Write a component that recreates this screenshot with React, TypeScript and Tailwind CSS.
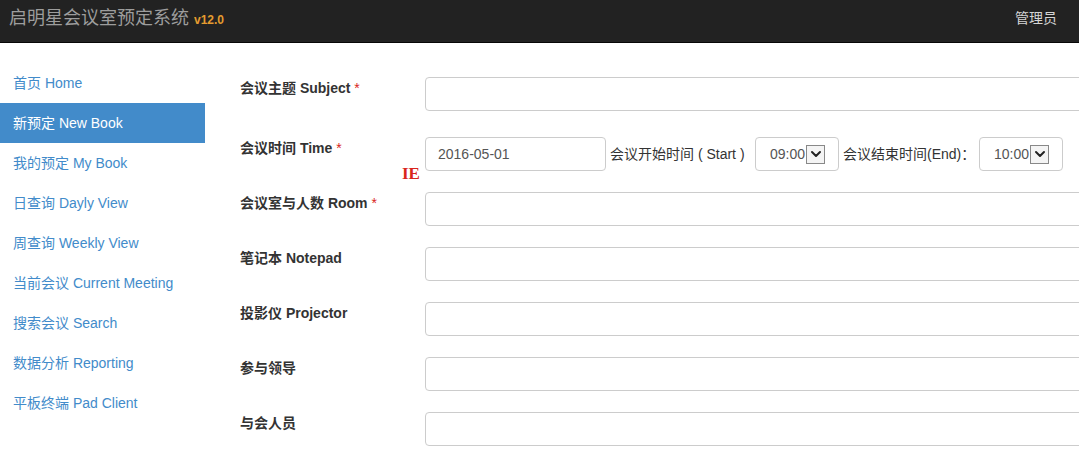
import { ChevronDown } from "lucide-react";

const menu = [
  "首页 Home",
  "新预定 New Book",
  "我的预定 My Book",
  "日查询 Dayly View",
  "周查询 Weekly View",
  "当前会议 Current Meeting",
  "搜索会议 Search",
  "数据分析 Reporting",
  "平板终端 Pad Client",
];

const rows = [
  { label: "会议室与人数 Room", required: true },
  { label: "笔记本 Notepad", required: false },
  { label: "投影仪 Projector", required: false },
  { label: "参与领导", required: false },
  { label: "与会人员", required: false },
];

const font = "font-['Liberation_Sans','Noto_Sans_CJK_SC',sans-serif]";

const FakeSelect = ({ value }: { value: string }) => (
  <div className="flex items-center h-[34px] w-[84px] shrink-0 border border-[#ccc] rounded-[4px] pl-[14px] text-[14px] text-[#555]">
    <span>{value}</span>
    <span className="ml-[1px] flex items-center justify-center w-[19px] h-[19px] border border-[#888] bg-[#f4f4f4]">
      <ChevronDown size={16} strokeWidth={3} className="text-[#222]" />
    </span>
  </div>
);

const Label = ({ text, required }: { text: string; required: boolean }) => (
  <div className="w-[185px] shrink-0 pt-[1px] leading-[20px] text-[14px] font-bold text-[#333]">
    {text}
    {required && <span className="text-[#d9251c] font-normal"> *</span>}
  </div>
);

export default function App() {
  return (
    <div className={`${font} w-[1079px] h-[464px] overflow-hidden bg-white`}>
      <div className="h-[43px] bg-[#222] border-b border-[#080808] flex items-center justify-between pl-[9px] pr-[22px]">
        <div className="flex items-baseline -mt-[5px]">
          <span className="text-[18px] text-[#9d9d9d]">启明星会议室预定系统</span>
          <span className="ml-[5px] text-[12px] font-bold text-[#e49b2f]">v12.0</span>
        </div>
        <span className="text-[14px] text-[#d5d5d5] -mt-[6px]">管理员</span>
      </div>

      <div className="flex">
        <div className="w-[205px] shrink-0 pt-[20px]">
          {menu.map((m, i) => (
            <div
              key={m}
              className={`h-[40px] flex items-center pl-[13px] text-[14px] ${
                i === 1 ? "bg-[#428bca] text-white" : "text-[#428bca]"
              }`}
            >
              {m}
            </div>
          ))}
        </div>

        <div className="flex-1 pl-[35px] pt-[34px] overflow-hidden">
          <div className="flex mb-[26px]">
            <Label text="会议主题 Subject" required />
            <div className="w-[700px] h-[34px] shrink-0 border border-[#ccc] rounded-[4px]" />
          </div>

          <div className="flex mb-[21px]">
            <div className="relative">
              <Label text="会议时间 Time" required />
              <span className="absolute left-[162px] top-[24px] text-[17px] font-bold text-[#d9251c] font-['Liberation_Serif',serif]">
                IE
              </span>
            </div>
            <div className="flex items-center text-[14px] text-[#333] shrink-0">
              <div className="w-[181px] h-[34px] border border-[#ccc] rounded-[4px] flex items-center pl-[12px] text-[#555]">
                2016-05-01
              </div>
              <span className="w-[149px] pl-[4px] whitespace-nowrap">会议开始时间 ( Start )</span>
              <FakeSelect value="09:00" />
              <span className="w-[140px] pl-[4px] whitespace-nowrap">会议结束时间(End)：</span>
              <FakeSelect value="10:00" />
            </div>
          </div>

          {rows.map((r) => (
            <div key={r.label} className="flex mb-[21px]">
              <Label text={r.label} required={r.required} />
              <div className="w-[700px] h-[34px] shrink-0 border border-[#ccc] rounded-[4px]" />
            </div>
          ))}
        </div>
      </div>
    </div>
  );
}
